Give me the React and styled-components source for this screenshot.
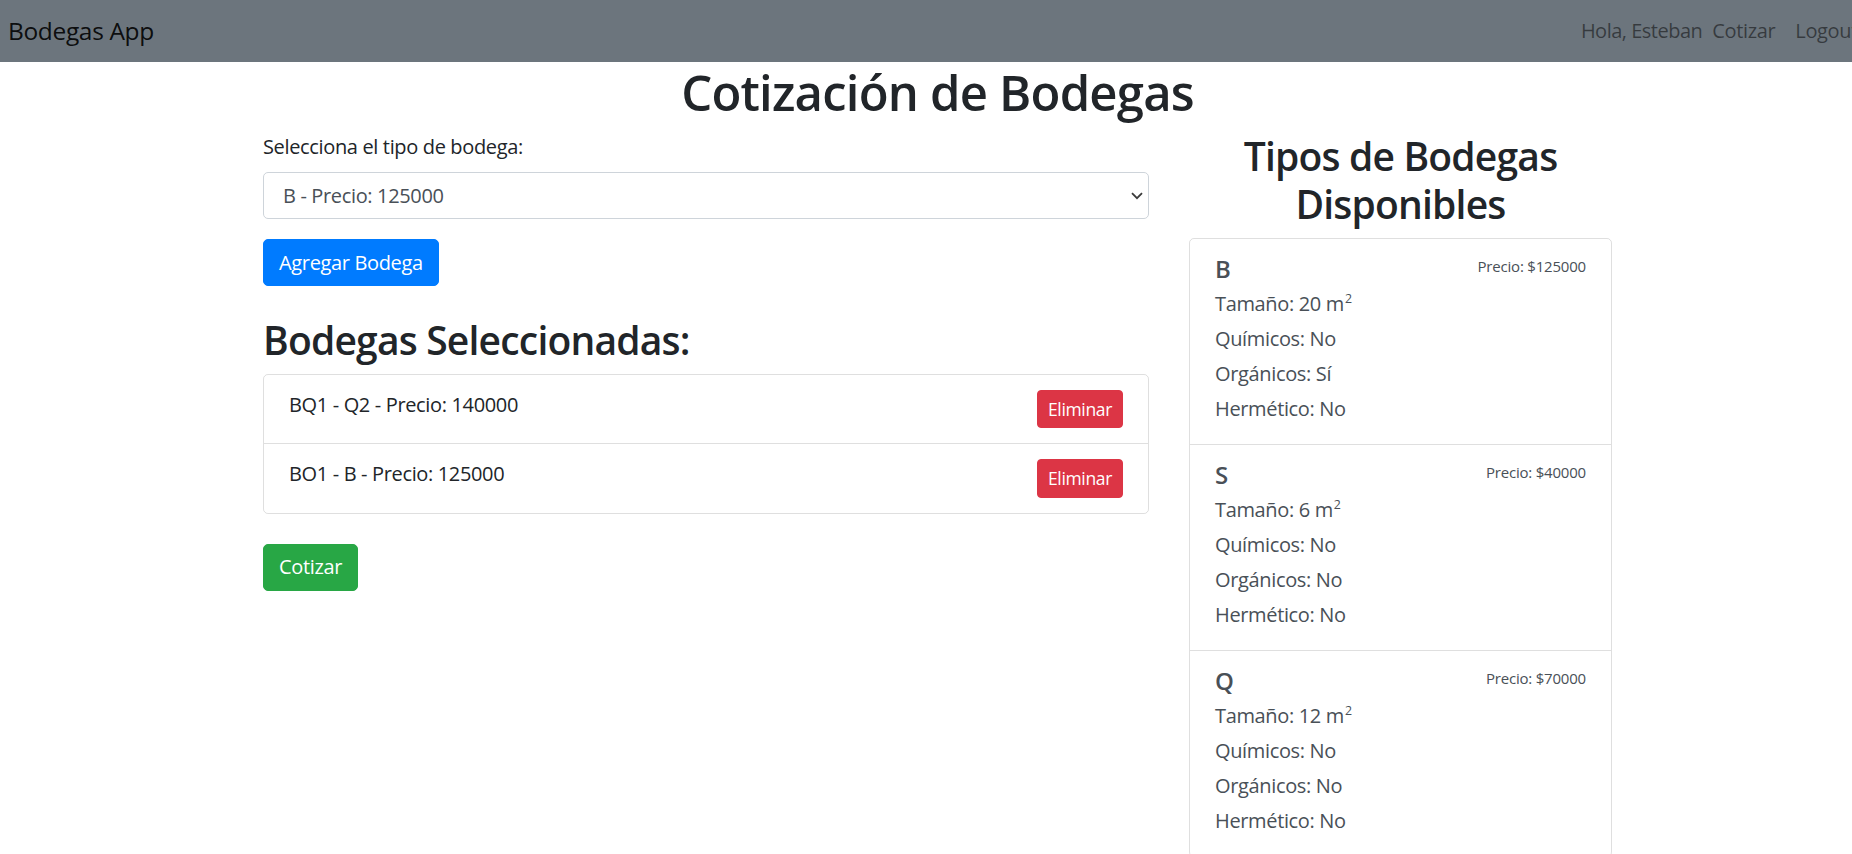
import React from "react";
import styled, { createGlobalStyle } from "styled-components";

const GlobalStyle = createGlobalStyle`
  html, body {
    margin: 0;
    padding: 0;
    overflow: hidden;
    background: #fff;
  }
  body {
    font-family: "Open Sans", "Noto Sans", sans-serif;
    color: #212529;
    font-size: 20px;
    line-height: 1.5;
    letter-spacing: -0.35px;
  }
  * { box-sizing: border-box; }
`;

const Page = styled.div`
  width: 1875px;
`;

const NavBar = styled.nav`
  height: 62px;
  background: #6c757d;
  display: flex;
  align-items: center;
  justify-content: space-between;
  padding: 0 5px 0 8px;
`;

const Brand = styled.span`
  font-size: 24.5px;
  line-height: 1.5;
  color: rgba(0, 0, 0, 0.9);
`;

const NavGroup = styled.div`
  display: flex;
  align-items: center;
`;

const NavText = styled.span`
  font-size: 20px;
  line-height: 30px;
  letter-spacing: -0.5px;
  color: rgba(0, 0, 0, 0.5);
`;

const NavLink = styled.a`
  font-size: 20px;
  line-height: 30px;
  padding: 0 ${(p) => (p.$last ? "12px" : "10px")} 0 10px;
  color: rgba(0, 0, 0, 0.5);
  text-decoration: none;
`;

const Main = styled.main`
  width: 1349px;
  margin: 0 auto;
`;

const Title = styled.h1`
  margin: 0 0 10px;
  font-size: 49px;
  font-weight: 600;
  letter-spacing: -0.8px;
  line-height: 60px;
  text-align: center;
`;

const Columns = styled.div`
  display: grid;
  grid-template-columns: 886px 423px;
  column-gap: 40px;
  align-items: start;
`;

const Column = styled.section`
  min-width: 0;
`;

const FormGroup = styled.div`
  margin-bottom: 20px;
`;

const Label = styled.label`
  display: block;
  font-size: 20px;
  line-height: 30px;
  margin-bottom: 10px;
`;

const SelectWrap = styled.div`
  position: relative;
`;

const Select = styled.select`
  display: block;
  width: 100%;
  height: 47px;
  padding: 0 30px 0 19px;
  font-family: inherit;
  font-size: 20px;
  letter-spacing: inherit;
  color: #495057;
  background: #fff;
  border: 1px solid #ced4da;
  border-radius: 5px;
  appearance: none;
  -webkit-appearance: none;
  outline: none;
`;

const Chevron = styled.svg`
  position: absolute;
  right: 6px;
  top: 50%;
  margin-top: -4px;
  pointer-events: none;
`;

const colors = {
  primary: "#007bff",
  success: "#28a745",
  danger: "#dc3545",
};

const Button = styled.button`
  display: inline-block;
  font-family: inherit;
  letter-spacing: inherit;
  font-size: ${(p) => (p.$small ? "17.5px" : "20px")};
  line-height: ${(p) => (p.$small ? "26.25px" : "30px")};
  padding: ${(p) => (p.$small ? "5px 10px" : "7.5px 15px")};
  border: 1px solid ${(p) => colors[p.$variant]};
  border-radius: ${(p) => (p.$small ? "4px" : "5px")};
  background: ${(p) => colors[p.$variant]};
  color: #fff;
  cursor: pointer;
`;

const SectionTitle = styled.h2`
  margin: ${(p) => (p.$aside ? "0 0 10px" : "30px 0 10px")};
  font-size: 39px;
  font-weight: 600;
  letter-spacing: -0.8px;
  line-height: 48px;
  text-align: ${(p) => (p.$aside ? "center" : "left")};
`;

const ListGroup = styled.div`
  display: flex;
  flex-direction: column;
  border: 1px solid rgba(0, 0, 0, 0.125);
  border-radius: 5px;
`;

const SelectedItem = styled.div`
  display: flex;
  justify-content: space-between;
  align-items: flex-start;
  padding: 15px 25px;
  font-size: 20px;
  line-height: 30px;
  & + & {
    border-top: 1px solid rgba(0, 0, 0, 0.125);
  }
`;

const Actions = styled.div`
  margin-top: 30px;
`;

const TypeItem = styled.div`
  padding: 15px 25px;
  color: #495057;
  & + & {
    border-top: 1px solid rgba(0, 0, 0, 0.125);
  }
`;

const TypeHeader = styled.div`
  display: flex;
  justify-content: space-between;
`;

const TypeName = styled.h5`
  margin: 0 0 5px;
  font-size: 24px;
  font-weight: 600;
  line-height: 30px;
`;

const Price = styled.small`
  font-size: 15px;
  line-height: 24px;
  letter-spacing: -0.2px;
`;

const Attr = styled.p`
  margin: 0 0 5px;
  font-size: 20px;
  line-height: 30px;
`;

const Sup = styled.sup`
  font-size: 62%;
  line-height: 0;
  vertical-align: 0.62em;
  margin-left: 1px;
`;

const selected = [
  { id: "BQ1", type: "Q2", price: 140000 },
  { id: "BO1", type: "B", price: 125000 },
];

const tipos = [
  { name: "B", size: 20, quimicos: "No", organicos: "Sí", hermetico: "No", price: 125000 },
  { name: "S", size: 6, quimicos: "No", organicos: "No", hermetico: "No", price: 40000 },
  { name: "Q", size: 12, quimicos: "No", organicos: "No", hermetico: "No", price: 70000 },
];

export default function App() {
  return (
    <Page>
      <GlobalStyle />
      <NavBar>
        <Brand>Bodegas App</Brand>
        <NavGroup>
          <NavText>Hola, Esteban</NavText>
          <NavLink href="#">Cotizar</NavLink>
          <NavLink href="#" $last>
            Logout
          </NavLink>
        </NavGroup>
      </NavBar>
      <Main>
        <Title>Cotización de Bodegas</Title>
        <Columns>
          <Column>
            <FormGroup>
              <Label>Selecciona el tipo de bodega:</Label>
              <SelectWrap>
                <Select defaultValue="B">
                  <option value="B">B - Precio: 125000</option>
                  <option value="S">S - Precio: 40000</option>
                  <option value="Q">Q - Precio: 70000</option>
                </Select>
                <Chevron width="12" height="8" viewBox="0 0 12 8">
                  <path d="M1 1.2 L6 6.2 L11 1.2" fill="none" stroke="#3b3b3b" strokeWidth="1.8" />
                </Chevron>
              </SelectWrap>
            </FormGroup>
            <Button $variant="primary">Agregar Bodega</Button>
            <SectionTitle>Bodegas Seleccionadas:</SectionTitle>
            <ListGroup>
              {selected.map((s) => (
                <SelectedItem key={s.id}>
                  <span>
                    {s.id} - {s.type} - Precio: {s.price}
                  </span>
                  <Button $variant="danger" $small>
                    Eliminar
                  </Button>
                </SelectedItem>
              ))}
            </ListGroup>
            <Actions>
              <Button $variant="success">Cotizar</Button>
            </Actions>
          </Column>
          <Column>
            <SectionTitle $aside>
              Tipos de Bodegas
              <br />
              Disponibles
            </SectionTitle>
            <ListGroup>
              {tipos.map((t) => (
                <TypeItem key={t.name}>
                  <TypeHeader>
                    <TypeName>{t.name}</TypeName>
                    <Price>Precio: ${t.price}</Price>
                  </TypeHeader>
                  <Attr>
                    Tamaño: {t.size} m<Sup>2</Sup>
                  </Attr>
                  <Attr>Químicos: {t.quimicos}</Attr>
                  <Attr>Orgánicos: {t.organicos}</Attr>
                  <Attr>Hermético: {t.hermetico}</Attr>
                </TypeItem>
              ))}
            </ListGroup>
          </Column>
        </Columns>
      </Main>
    </Page>
  );
}
